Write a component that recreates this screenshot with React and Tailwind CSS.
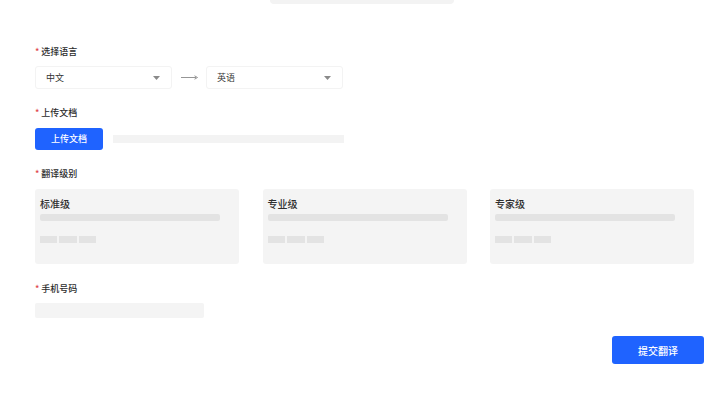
import React from "react";

const FONT = { fontFamily: '"Noto Sans CJK SC", "Noto Sans", sans-serif' };

function Label({ children }) {
  return (
    <div className="flex h-[12px] items-center text-[9px] font-medium leading-[12px] text-[#2b2b2b]">
      <span className="mr-[2px] text-[#e0474f]">*</span>
      {children}
    </div>
  );
}

function Select({ value }) {
  return (
    <div className="flex h-[23px] w-[137px] items-center justify-between rounded-[3px] border border-[#f3f3f3] pl-[10px] pr-[11px] text-[9px] text-[#333]">
      <span>{value}</span>
      <svg width="7" height="4" viewBox="0 0 7 4">
        <path d="M0 0h7L3.5 4z" fill="#8a8a8a" />
      </svg>
    </div>
  );
}

function LevelCard({ title }) {
  return (
    <div className="flex h-[75px] flex-col rounded-[3px] bg-[#f4f4f4] px-[5px] pt-[8px]">
      <div className="h-[14px] text-[10px] font-medium leading-[14px] text-[#2f2f2f]">{title}</div>
      <div className="mt-[3px] h-[7px] w-[180px] rounded-[2px] bg-[#e3e3e3]" />
      <div className="mt-[15px] flex gap-[2px]">
        <div className="h-[7px] w-[17px] bg-[#e3e3e3]" />
        <div className="h-[7px] w-[18px] bg-[#e3e3e3]" />
        <div className="h-[7px] w-[17px] bg-[#e3e3e3]" />
      </div>
    </div>
  );
}

export default function App() {
  return (
    <div className="relative h-[416px] w-[724px] overflow-hidden bg-white" style={FONT}>
      <div className="ml-[270px] h-[4px] w-[184px] rounded-b-[40px] bg-[#f3f3f3]" />

      <div className="flex flex-col pl-[35px] pr-[20px] pt-[42px]">
        <Label>选择语言</Label>
        <div className="mt-[8px] flex items-center">
          <Select value="中文" />
          <div className="flex w-[34px] justify-center">
            <svg width="17" height="5" viewBox="0 0 17 5">
              <path d="M0 2.5h15" stroke="#8a8a8a" strokeWidth="0.9" />
              <path d="M13.5 0.8L16.5 2.5L13.5 4.2" fill="none" stroke="#8a8a8a" strokeWidth="0.9" />
            </svg>
          </div>
          <Select value="英语" />
        </div>

        <div className="mt-[18px]">
          <Label>上传文档</Label>
        </div>
        <div className="mt-[9px] flex items-center">
          <button className="flex h-[22px] w-[68px] items-center justify-center rounded-[3px] bg-[#1f63ff] text-[9px] font-medium text-white">
            上传文档
          </button>
          <div className="ml-[10px] h-[8px] w-[231px] bg-[#f3f3f3]" />
        </div>

        <div className="mt-[18px]">
          <Label>翻译级别</Label>
        </div>
        <div className="mt-[9px] grid w-[659px] grid-cols-3 gap-x-[23.5px]">
          <LevelCard title="标准级" />
          <LevelCard title="专业级" />
          <LevelCard title="专家级" />
        </div>

        <div className="mt-[19px]">
          <Label>手机号码</Label>
        </div>
        <div className="mt-[8px] h-[15px] w-[169px] rounded-[2px] bg-[#f4f4f4]" />

        <div className="mt-[18px] flex justify-end">
          <button className="flex h-[28px] w-[92px] items-center justify-center rounded-[3px] bg-[#1f63ff] text-[10px] font-medium text-white">
            提交翻译
          </button>
        </div>
      </div>
    </div>
  );
}
